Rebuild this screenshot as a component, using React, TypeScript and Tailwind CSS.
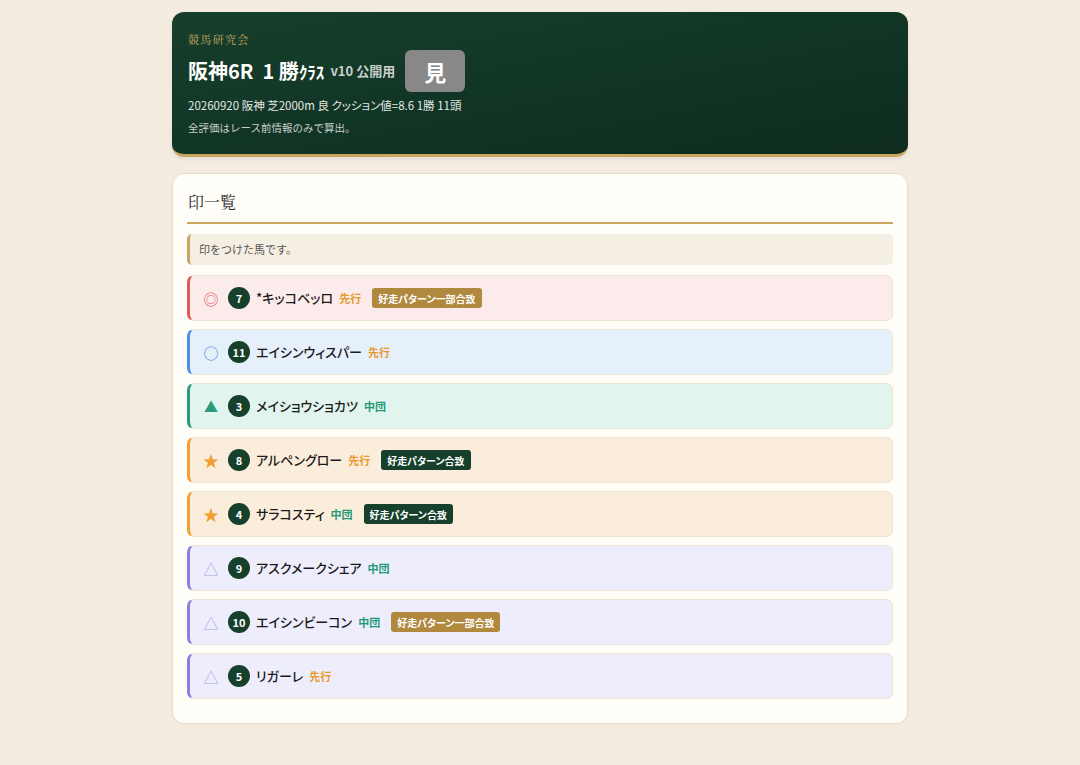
const SANS = "font-['Noto_Sans_CJK_JP','Noto_Sans',sans-serif]";

type Horse = {
  mark: "◎" | "○" | "▲" | "★" | "△";
  num: number;
  name: string;
  style: "先行" | "中団";
  badge?: "partial" | "full";
};

const horses: Horse[] = [
  { mark: "◎", num: 7, name: "*キッコベッロ", style: "先行", badge: "partial" },
  { mark: "○", num: 11, name: "エイシンウィスパー", style: "先行" },
  { mark: "▲", num: 3, name: "メイショウショカツ", style: "中団" },
  { mark: "★", num: 8, name: "アルペングロー", style: "先行", badge: "full" },
  { mark: "★", num: 4, name: "サラコスティ", style: "中団", badge: "full" },
  { mark: "△", num: 9, name: "アスクメークシェア", style: "中団" },
  { mark: "△", num: 10, name: "エイシンビーコン", style: "中団", badge: "partial" },
  { mark: "△", num: 5, name: "リガーレ", style: "先行" },
];

const rowTone: Record<Horse["mark"], string> = {
  "◎": "bg-[#fcebeb] border-l-[#e05a5a]",
  "○": "bg-[#e6f0fb] border-l-[#4a8fe0]",
  "▲": "bg-[#e2f4ee] border-l-[#2a9a78]",
  "★": "bg-[#fbeddb] border-l-[#f0a030]",
  "△": "bg-[#eeedfc] border-l-[#8a7fdc]",
};

const markTone: Record<Horse["mark"], string> = {
  "◎": "text-[#e05a5a] text-[15px]",
  "○": "text-[#4a8fe0] text-[15px]",
  "▲": "text-[#2a9a78] text-[14px]",
  "★": "text-[#f0a030] text-[16px]",
  "△": "text-[#a89ee6] text-[15px]",
};

function HorseRow({ h }: { h: Horse }) {
  return (
    <div
      className={`flex items-center h-[46px] shrink-0 pl-[13px] pr-3 rounded-[7px] border border-[#ece3d3] border-l-[3px] ${rowTone[h.mark]}`}
    >
      <span className={`w-[16px] flex justify-center leading-none ${markTone[h.mark]}`}>
        {h.mark}
      </span>
      <span className="ml-[9px] w-[22px] h-[22px] rounded-full bg-[#16402b] text-white text-[11px] font-bold flex items-center justify-center">
        {h.num}
      </span>
      <span className="ml-[6px] text-[13px] font-medium text-[#1a1a1a] [font-feature-settings:'palt']">
        {h.name}
      </span>
      <span
        className={`ml-[6px] text-[11px] font-bold ${
          h.style === "先行" ? "text-[#e8982a]" : "text-[#1f9a78]"
        }`}
      >
        {h.style}
      </span>
      {h.badge && (
        <span
          className={`ml-[11px] px-[6px] h-[20px] flex items-center rounded-[3px] text-[10px] font-bold text-white [font-feature-settings:'palt'] ${
            h.badge === "partial" ? "bg-[#b0883e]" : "bg-[#16402b]"
          }`}
        >
          {h.badge === "partial" ? "好走パターン一部合致" : "好走パターン合致"}
        </span>
      )}
    </div>
  );
}

export default function App() {
  return (
    <div className={`min-h-[765px] bg-[#f4ece0] pt-3 pb-10 ${SANS}`}>
      <div className="w-[736px] mx-auto flex flex-col gap-4">
        {/* Header */}
        <div className="rounded-xl bg-gradient-to-br from-[#163f2c] to-[#0d2c1e] border-b-[3px] border-[#c9a55f] px-4 pt-[19px] pb-[16px] shadow-[0_2px_4px_rgba(0,0,0,0.08)]">
          <div className="text-[11px] tracking-[0.12em] text-[#c9a55f] font-['Noto_Serif_CJK_JP','Liberation_Serif',serif] leading-4">
            競馬研究会
          </div>
          <div className="mt-[3px] flex items-center">
            <span className="text-[20px] font-bold text-white leading-none">阪神6R&nbsp; 1 勝<span className="text-[17px]">ｸﾗｽ</span></span>
            <span className="ml-[6px] text-[13px] font-bold text-[#c9cfcb]">v10 公開用</span>
            <span className="ml-[10px] w-[60px] h-[42px] rounded-md bg-[#888888] text-white text-[22px] font-bold flex items-center justify-center">
              見
            </span>
          </div>
          <div className="mt-[3px] text-[11.5px] text-[#e4e8e5] leading-5 [font-feature-settings:'palt']">
            20260920 阪神 芝2000m 良 クッション値=8.6 1勝 11頭
          </div>
          <div className="mt-[3px] text-[10.5px] text-[#c6cdc9] leading-5">
            全評価はレース前情報のみで算出。
          </div>
        </div>

        {/* Marks list */}
        <div className="rounded-xl bg-[#fffdf8] border border-[#e6dccb] px-[14px] pt-[16px] pb-[24px] shadow-[0_1px_3px_rgba(0,0,0,0.04)]">
          <div className="px-[1px] pb-[8px] border-b-2 border-[#c9a55f] text-[16px] text-[#2a2a2a] font-['Noto_Serif_CJK_JP','Liberation_Serif',serif] leading-6">
            印一覧
          </div>
          <div className="mt-[10px] h-[31px] flex items-center px-[9px] bg-[#f5eee2] rounded-[5px] border-l-[3px] border-[#c9a55f] text-[11px] text-[#555]">
            印をつけた馬です。
          </div>
          <div className="mt-[10px] flex flex-col gap-2">
            {horses.map((h) => (
              <HorseRow key={h.num} h={h} />
            ))}
          </div>
        </div>
      </div>
    </div>
  );
}
